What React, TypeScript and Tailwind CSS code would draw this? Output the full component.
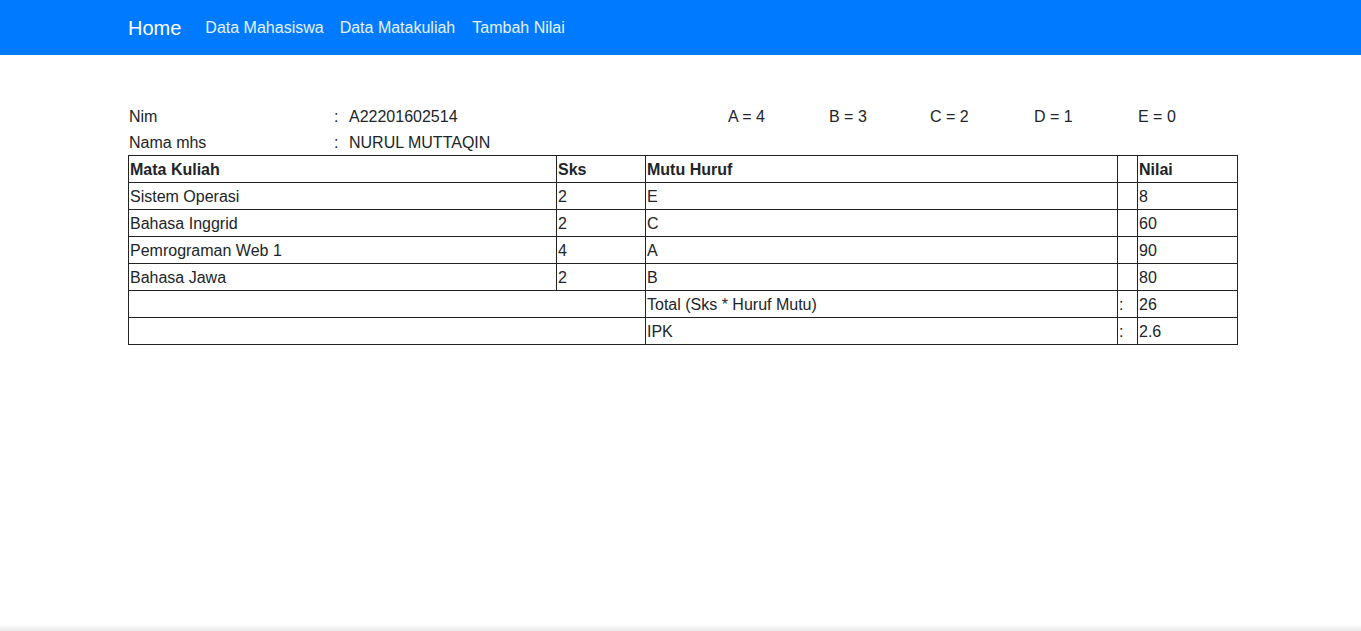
const rows = [
  { mk: "Sistem Operasi", sks: "2", huruf: "E", nilai: "8" },
  { mk: "Bahasa Inggrid", sks: "2", huruf: "C", nilai: "60" },
  { mk: "Pemrograman Web 1", sks: "4", huruf: "A", nilai: "90" },
  { mk: "Bahasa Jawa", sks: "2", huruf: "B", nilai: "80" },
];

const grades = [
  { label: "A = 4", w: "w-[101px]" },
  { label: "B = 3", w: "w-[101px]" },
  { label: "C = 2", w: "w-[104px]" },
  { label: "D = 1", w: "w-[104px]" },
  { label: "E = 0", w: "w-[100px]" },
];

const td = "border border-[#222] px-[1px] pt-[2px] h-[27px] leading-6 align-middle";

export default function App() {
  return (
    <div className="min-h-screen bg-white text-[#212529] text-base font-['Liberation_Sans',Arial,sans-serif]">
      <nav className="h-[55px] bg-[#007bff] flex items-center pl-[128px]">
        <a href="#" className="text-white text-xl mr-6 leading-[30px]">
          Home
        </a>
        <div className="flex gap-4">
          <a href="#" className="text-white/90">Data Mahasiswa</a>
          <a href="#" className="text-white/90">Data Matakuliah</a>
          <a href="#" className="text-white/90 ml-[1px]">Tambah Nilai</a>
        </div>
      </nav>

      <main className="ml-[128px] w-[1110px] pt-[49px]">
        <div className="flex h-[26px] items-center">
          <span className="w-[206px] pl-[1px]">Nim</span>
          <span className="w-[15px]">:</span>
          <span className="w-[379px]">A22201602514</span>
          {grades.map((g) => (
            <span key={g.label} className={g.w}>
              {g.label}
            </span>
          ))}
        </div>
        <div className="flex h-[25px] items-center">
          <span className="w-[206px] pl-[1px]">Nama mhs</span>
          <span className="w-[15px]">:</span>
          <span>NURUL MUTTAQIN</span>
        </div>

        <table className="w-[1109px] border-collapse table-fixed">
          <colgroup>
            <col className="w-[428px]" />
            <col className="w-[89px]" />
            <col className="w-[472px]" />
            <col className="w-[20px]" />
            <col className="w-[100px]" />
          </colgroup>
          <thead>
            <tr>
              <th className={`${td} text-left font-bold`}>Mata Kuliah</th>
              <th className={`${td} text-left font-bold`}>Sks</th>
              <th className={`${td} text-left font-bold`}>Mutu Huruf</th>
              <th className={td}></th>
              <th className={`${td} text-left font-bold`}>Nilai</th>
            </tr>
          </thead>
          <tbody>
            {rows.map((r) => (
              <tr key={r.mk}>
                <td className={td}>{r.mk}</td>
                <td className={td}>{r.sks}</td>
                <td className={td}>{r.huruf}</td>
                <td className={td}></td>
                <td className={td}>{r.nilai}</td>
              </tr>
            ))}
            <tr>
              <td className={td} colSpan={2}></td>
              <td className={td}>Total (Sks * Huruf Mutu)</td>
              <td className={td}>:</td>
              <td className={td}>26</td>
            </tr>
            <tr>
              <td className={td} colSpan={2}></td>
              <td className={td}>IPK</td>
              <td className={td}>:</td>
              <td className={td}>2.6</td>
            </tr>
          </tbody>
        </table>
      </main>

      <div className="fixed bottom-0 left-0 right-0 h-[7px] bg-gradient-to-b from-white to-[#e9e9e9]" />
    </div>
  );
}
